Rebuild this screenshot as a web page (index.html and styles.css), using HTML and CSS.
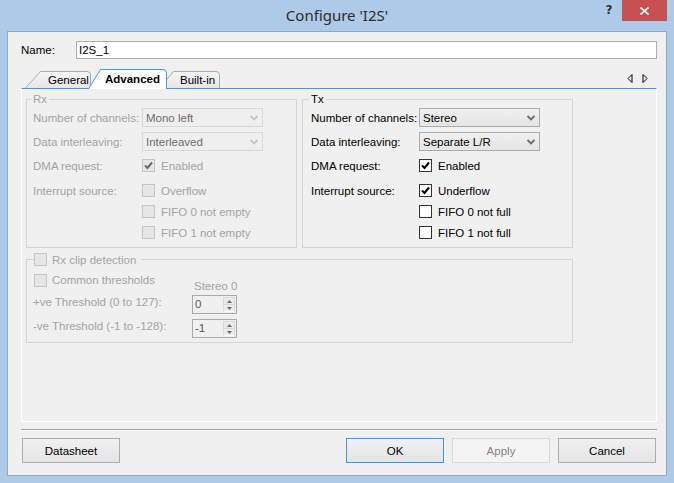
FILE: index.html
```html
<!DOCTYPE html>
<html>
<head>
<meta charset="utf-8">
<title>Configure 'I2S'</title>
<link rel="stylesheet" href="styles.css">
</head>
<body>
<div class="window">
  <div class="titlebar">
    <div></div>
    <div class="title">Configure 'I2S'</div>
    <div class="controls">
      <span class="help">?</span>
      <span class="close"><svg width="9" height="8" viewBox="0 0 9 8"><path d="M0.5 0.5 L8.5 7.5 M8.5 0.5 L0.5 7.5" stroke="#fff" stroke-width="1.6" fill="none"/></svg></span>
    </div>
  </div>

  <div class="content">
    <div class="name-row">
      <span class="name-label">Name:</span>
      <div class="textbox">I2S_1</div>
    </div>

    <div class="tabrow">
      <div class="tab tab-general">
        <svg class="tab-shape" width="66" height="17" viewBox="0 0 66 17"><defs><linearGradient id="tg1" x1="0" y1="0" x2="0" y2="1"><stop offset="0" stop-color="#f6f6f6"/><stop offset="1" stop-color="#e6e6e6"/></linearGradient></defs><path d="M0.5 17 L15.5 0.5 H62 Q65.5 0.5 65.5 4 V17" fill="url(#tg1)" stroke="#acacac"/></svg>
        <span>General</span>
      </div>
      <div class="tab tab-active">
        <svg class="tab-shape" width="79" height="20" viewBox="0 0 79 20"><path d="M0.5 20 L12.5 0.5 H75 Q78.5 0.5 78.5 4 V20" fill="#fff" stroke="#3c9bed"/></svg>
        <span>Advanced</span>
      </div>
      <div class="tab tab-builtin">
        <svg class="tab-shape" width="61" height="17" viewBox="0 0 61 17"><defs><linearGradient id="tg2" x1="0" y1="0" x2="0" y2="1"><stop offset="0" stop-color="#f6f6f6"/><stop offset="1" stop-color="#e6e6e6"/></linearGradient></defs><path d="M0.5 17 L14.5 0.5 H57 Q60.5 0.5 60.5 4 V17" fill="url(#tg2)" stroke="#acacac"/></svg>
        <span>Built-in</span>
      </div>
      <div class="tab-arrows">
        <svg width="6" height="9" viewBox="0 0 6 9"><path d="M5 0.5 L1 4.5 L5 8.5 Z" fill="none" stroke="#000"/></svg>
        <svg width="6" height="9" viewBox="0 0 6 9"><path d="M1 0.5 L5 4.5 L1 8.5 Z" fill="none" stroke="#000"/></svg>
      </div>
    </div>

    <div class="panel">
      <div class="groups">
        <div class="group g-rx dis">
          <div class="group-title">Rx</div>
          <div class="row r1"><span class="lbl">Number of channels:</span>
            <div class="combo combo-dis"><span>Mono left</span><svg width="8" height="6" viewBox="0 0 8 6"><path d="M0.5 1 L4 4.5 L7.5 1" fill="none" stroke="#c4c4c4" stroke-width="1.8"/></svg></div>
          </div>
          <div class="row r2"><span class="lbl">Data interleaving:</span>
            <div class="combo combo-dis"><span>Interleaved</span><svg width="8" height="6" viewBox="0 0 8 6"><path d="M0.5 1 L4 4.5 L7.5 1" fill="none" stroke="#c4c4c4" stroke-width="1.8"/></svg></div>
          </div>
          <div class="row r3"><span class="lbl">DMA request:</span>
            <span class="box box-dis"><svg width="11" height="11" viewBox="0 0 11 11"><path d="M2 5.5 L4.5 8 L9 2.5" fill="none" stroke="#6a6a6a" stroke-width="2"/></svg></span><span>Enabled</span>
          </div>
          <div class="row r4"><span class="lbl">Interrupt source:</span>
            <span class="box box-dis"></span><span>Overflow</span>
          </div>
          <div class="row r5"><span class="lbl"></span>
            <span class="box box-dis"></span><span>FIFO 0 not empty</span>
          </div>
          <div class="row r6"><span class="lbl"></span>
            <span class="box box-dis"></span><span>FIFO 1 not empty</span>
          </div>
        </div>

        <div class="group g-tx">
          <div class="group-title">Tx</div>
          <div class="row r1"><span class="lbl">Number of channels:</span>
            <div class="combo"><span>Stereo</span><svg width="8" height="6" viewBox="0 0 8 6"><path d="M0.5 1 L4 4.5 L7.5 1" fill="none" stroke="#6a6a6a" stroke-width="1.8"/></svg></div>
          </div>
          <div class="row r2"><span class="lbl">Data interleaving:</span>
            <div class="combo"><span>Separate L/R</span><svg width="8" height="6" viewBox="0 0 8 6"><path d="M0.5 1 L4 4.5 L7.5 1" fill="none" stroke="#6a6a6a" stroke-width="1.8"/></svg></div>
          </div>
          <div class="row r3"><span class="lbl">DMA request:</span>
            <span class="box"><svg width="11" height="11" viewBox="0 0 11 11"><path d="M2 5.5 L4.5 8 L9 2.5" fill="none" stroke="#000" stroke-width="2"/></svg></span><span>Enabled</span>
          </div>
          <div class="row r4"><span class="lbl">Interrupt source:</span>
            <span class="box"><svg width="11" height="11" viewBox="0 0 11 11"><path d="M2 5.5 L4.5 8 L9 2.5" fill="none" stroke="#000" stroke-width="2"/></svg></span><span>Underflow</span>
          </div>
          <div class="row r5"><span class="lbl"></span>
            <span class="box"></span><span>FIFO 0 not full</span>
          </div>
          <div class="row r6"><span class="lbl"></span>
            <span class="box"></span><span>FIFO 1 not full</span>
          </div>
        </div>
      </div>

      <div class="group g-clip dis">
        <div class="clip-title"><span class="box box-dis"></span><span>Rx clip detection</span></div>
        <div class="clip-grid">
          <div class="common"><span class="box box-dis"></span><span>Common thresholds</span></div>
          <div class="col-head">Stereo 0</div>
          <div class="tlabel tb">+ve Threshold (0 to 127):</div>
          <div class="spin"><span class="spin-text">0</span><span class="spin-btns"><span class="sb"><svg width="5" height="3" viewBox="0 0 5 3"><path d="M0 3 L2.5 0 L5 3 Z" fill="#6a6a6a"/></svg></span><span class="sb"><svg width="5" height="3" viewBox="0 0 5 3"><path d="M0 0 L2.5 3 L5 0 Z" fill="#6a6a6a"/></svg></span></span></div>
          <div class="tlabel tc">-ve Threshold (-1 to -128):</div>
          <div class="spin"><span class="spin-text">-1</span><span class="spin-btns"><span class="sb"><svg width="5" height="3" viewBox="0 0 5 3"><path d="M0 3 L2.5 0 L5 3 Z" fill="#6a6a6a"/></svg></span><span class="sb"><svg width="5" height="3" viewBox="0 0 5 3"><path d="M0 0 L2.5 3 L5 0 Z" fill="#6a6a6a"/></svg></span></span></div>
        </div>
      </div>
    </div>

    <div class="separator"></div>

    <div class="buttons">
      <div class="btn">Datasheet</div>
      <div class="btn btn-default push">OK</div>
      <div class="btn btn-disabled">Apply</div>
      <div class="btn">Cancel</div>
    </div>
  </div>
</div>
</body>
</html>
```
FILE: styles.css
```css
html, body {
  margin: 0;
  padding: 0;
}
body {
  width: 674px;
  height: 483px;
  overflow: hidden;
  background: #adcbe7;
  font-family: "Liberation Sans", Arial, sans-serif;
  font-size: 11.5px;
  color: #000;
}
.window {
  display: flex;
  flex-direction: column;
}
.titlebar {
  height: 31px;
  display: grid;
  grid-template-columns: 1fr auto 1fr;
}
.title {
  font-family: "Noto Sans", sans-serif;
  font-size: 15px;
  line-height: 31px;
  color: #2b2b2b;
}
.controls {
  justify-self: end;
  display: flex;
  align-items: flex-start;
  margin-right: 7px;
}
.help {
  width: 26px;
  height: 21px;
  line-height: 21px;
  text-align: center;
  font-family: "DejaVu Sans", sans-serif;
  font-weight: bold;
  font-size: 12px;
  color: #333;
}
.close {
  width: 45px;
  height: 21px;
  background: #c75050;
  display: flex;
  align-items: center;
  justify-content: center;
}
.content {
  margin: 0 7px;
  height: 445px;
  box-sizing: border-box;
  border: 1px solid #8eaacb;
  background: #f0f0f0;
  padding: 9px 9px 0 13px;
}
.name-row {
  display: flex;
  align-items: center;
  height: 18px;
}
.name-label {
  width: 55px;
  flex: none;
}
.textbox {
  flex: 1;
  height: 18px;
  box-sizing: border-box;
  border: 1px solid #abadb3;
  background: #fff;
  padding-left: 2px;
  line-height: 16px;
}
.tabrow {
  display: flex;
  align-items: flex-end;
  height: 19px;
  margin-top: 10px;
  padding-left: 4px;
}
.tab {
  position: relative;
  display: flex;
  align-items: center;
  height: 17px;
  box-sizing: border-box;
  flex: none;
}
.tab span {
  position: relative;
}
.tab-shape {
  position: absolute;
  left: 0;
  top: 0;
}
.tab-general {
  width: 66px;
  padding-left: 23px;
}
.tab-active {
  width: 79px;
  height: 20px;
  margin-left: -3px;
  margin-bottom: -1px;
  padding-left: 17px;
  padding-bottom: 1px;
  z-index: 2;
  font-weight: bold;
}
.tab-builtin {
  width: 61px;
  margin-left: -8px;
  padding-left: 21px;
}
.tab-arrows {
  margin-left: auto;
  margin-right: 9px;
  align-self: center;
  display: flex;
  gap: 9px;
}
.tab-arrows svg {
  display: block;
}
.panel {
  height: 334px;
  box-sizing: border-box;
  border: 1px solid #fff;
  border-top-color: #3c9bed;
  padding: 10px 0 0 4px;
}
.groups {
  display: flex;
  gap: 5px;
}
.group {
  width: 271px;
  box-sizing: border-box;
  border: 1px solid #d5d5d5;
  padding: 0 6px 4px 6px;
}
.g-tx {
  padding-left: 8px;
}
.group-title {
  width: max-content;
  height: 14px;
  line-height: 14px;
  margin-top: -8px;
  margin-left: -2px;
  padding: 0 2px;
  background: #f0f0f0;
}
.dis {
  color: #a3a3a3;
}
.row {
  display: flex;
  align-items: center;
  height: 21px;
}
.r1 { margin-top: 1px; }
.r2 { margin-top: 3px; }
.r3 { margin-top: 3px; }
.r4 { margin-top: 4px; }
.lbl {
  width: 109px;
  flex: none;
}
.g-tx .lbl {
  width: 108px;
}
.combo {
  width: 121px;
  height: 19px;
  box-sizing: border-box;
  border: 1px solid #acacac;
  background: linear-gradient(#f0f0f0, #e5e5e5);
  display: flex;
  align-items: center;
  justify-content: space-between;
  padding: 0 4px 0 3px;
  color: #000;
}
.combo svg {
  display: block;
}
.combo-dis {
  border-color: #d9d9d9;
  background: #efefef;
  color: #6d6d6d;
}
.box {
  width: 13px;
  height: 13px;
  box-sizing: border-box;
  border: 1px solid #333;
  background: #fff;
  margin-right: 6px;
  flex: none;
  display: flex;
}
.box svg {
  display: block;
}
.box-dis {
  border-color: #c5c5c5;
  background: #e6e6e6;
}
.g-clip {
  width: 547px;
  margin-top: 11px;
  padding-left: 7px;
}
.clip-title {
  display: flex;
  align-items: center;
  width: max-content;
  height: 13px;
  margin-top: -7px;
  padding-right: 5px;
  background: #f0f0f0;
}
.clip-title .box {
  margin-right: 5px;
}
.clip-grid {
  display: grid;
  grid-template-columns: 158px 45px;
  grid-template-rows: 20px 21px 24px;
  margin-top: 7px;
}
.common {
  display: flex;
  align-items: center;
  height: 14px;
  align-self: start;
}
.common .box {
  margin-right: 5px;
}
.col-head {
  align-self: end;
  line-height: 14px;
  padding-left: 2px;
  white-space: nowrap;
}
.tlabel {
  align-self: start;
  line-height: 14px;
  margin-left: -1px;
}
.tb { margin-top: 2px; }
.tc { margin-top: 5px; }
.spin {
  align-self: end;
  height: 19px;
  box-sizing: border-box;
  border: 1px solid #a9a9a9;
  background: #f0f0f0;
  display: flex;
  color: #555;
}
.spin-text {
  flex: 1;
  line-height: 17px;
  padding-left: 2px;
}
.spin-btns {
  width: 13px;
  display: flex;
  flex-direction: column;
  padding: 1px 1px 1px 0;
  box-sizing: border-box;
}
.sb {
  flex: 1;
  display: flex;
  align-items: center;
  justify-content: center;
  background: #ebebeb;
  border: 1px solid #dadada;
}
.sb + .sb {
  border-top: none;
  border-bottom-color: #fff;
}
.sb svg {
  display: block;
}
.separator {
  margin-top: 7px;
  border-top: 1px solid #a0a0a0;
  border-bottom: 1px solid #fff;
}
.buttons {
  display: flex;
  gap: 8px;
  margin-top: 7px;
  padding: 0 1px;
}
.btn {
  width: 98px;
  height: 25px;
  box-sizing: border-box;
  border: 1px solid #acacac;
  background: linear-gradient(#f0f0f0, #e5e5e5);
  display: flex;
  align-items: center;
  justify-content: center;
}
.push {
  margin-left: auto;
}
.btn-default {
  border-color: #3399ff;
}
.btn-disabled {
  border-color: #d9d9d9;
  background: #f4f4f4;
  color: #838383;
}
```
